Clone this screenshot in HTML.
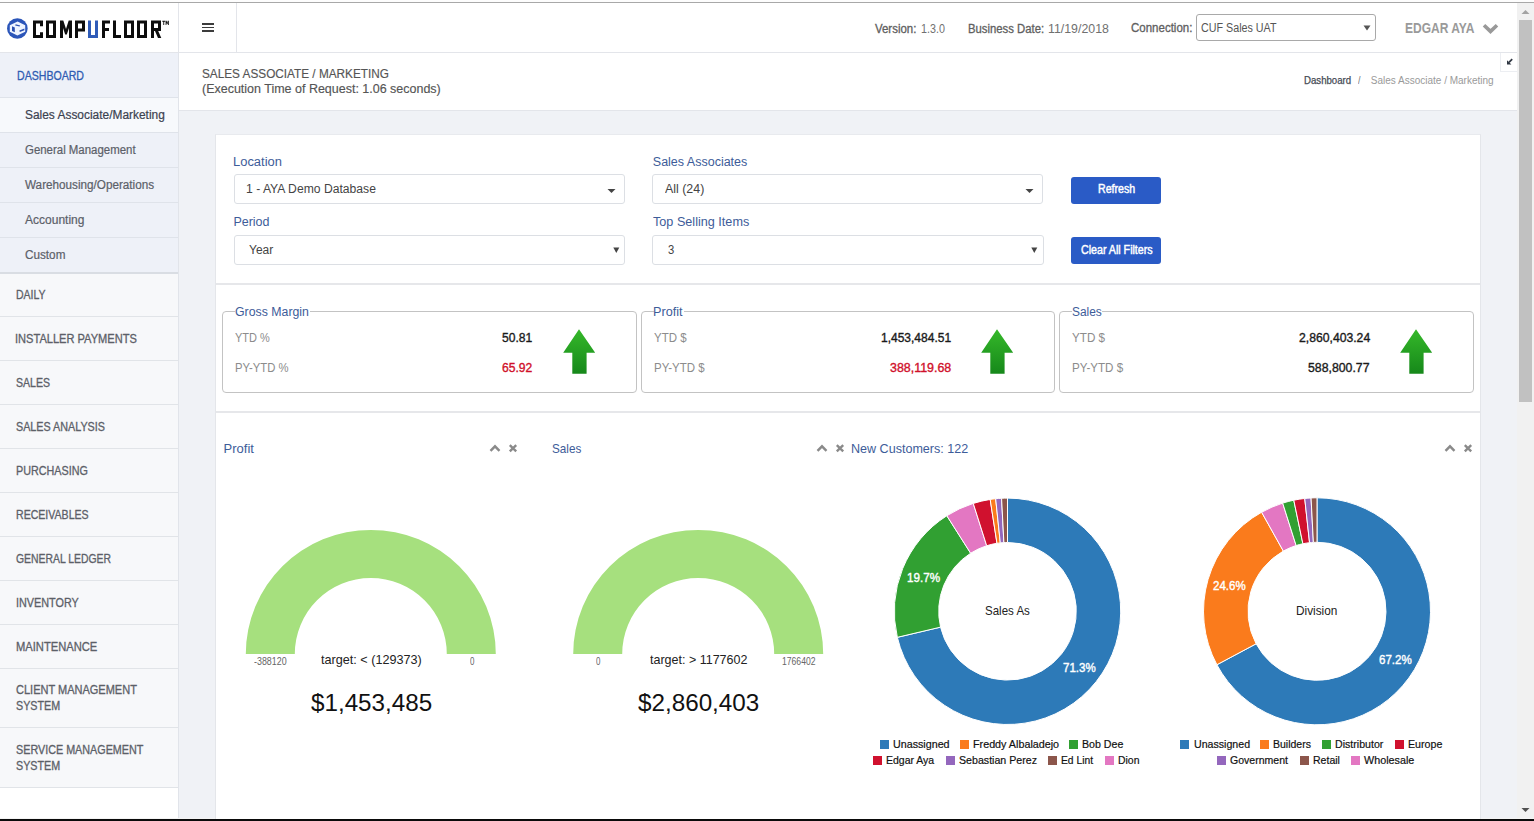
<!DOCTYPE html>
<html><head><meta charset="utf-8"><style>
html,body{margin:0;padding:0;}
body{width:1534px;height:821px;position:relative;overflow:hidden;background:#fff;font-family:"Liberation Sans",sans-serif;}
.t{position:absolute;white-space:nowrap;transform-origin:0 0;}
svg{position:absolute}
</style></head><body>
<div style="position:absolute;left:0px;top:0px;width:1534px;height:2px;background:#fdfdfd"></div>
<div style="position:absolute;left:0px;top:2px;width:1534px;height:1px;background:#a8a8a8"></div>
<div style="position:absolute;left:0px;top:818px;width:1534px;height:1px;background:#f4f4f4"></div>
<div style="position:absolute;left:0px;top:819px;width:1534px;height:2px;background:#0a0a0a"></div>
<div style="position:absolute;left:179px;top:111px;width:1338px;height:707px;background:#f0f2f6"></div>
<div style="position:absolute;left:0px;top:3px;width:1517px;height:49px;background:#fff"></div>
<div style="position:absolute;left:0px;top:52px;width:1517px;height:1px;background:#e3e5ea"></div>
<div style="position:absolute;left:178px;top:3px;width:1px;height:49px;background:#e3e5ea"></div>
<div style="position:absolute;left:236px;top:3px;width:1px;height:49px;background:#e3e5ea"></div>
<div style="position:absolute;left:202px;top:23.2px;width:12px;height:1.7px;background:#3c3c3c"></div>
<div style="position:absolute;left:202px;top:26.7px;width:12px;height:1.7px;background:#3c3c3c"></div>
<div style="position:absolute;left:202px;top:30.2px;width:12px;height:1.7px;background:#3c3c3c"></div>
<div style="position:absolute;left:0px;top:53px;width:178px;height:765px;background:#fff"></div>
<div style="position:absolute;left:178px;top:53px;width:1px;height:765px;background:#e1e4ea"></div>
<div style="position:absolute;left:0px;top:53px;width:178px;height:44px;background:#eef1f8"></div>
<div style="position:absolute;left:0px;top:97px;width:178px;height:1px;background:#dfe3ea"></div>
<div class="t" style="left:16.60px;top:70.34px;font-size:12px;line-height:12px;color:#2f5cb3;-webkit-text-stroke:0.3px #2f5cb3;transform:scaleX(0.8815);">DASHBOARD</div>
<div style="position:absolute;left:0px;top:98px;width:178px;height:34px;background:#f7f9fc"></div>
<div style="position:absolute;left:0px;top:132px;width:178px;height:1px;background:#dfe3ea"></div>
<div class="t" style="left:25.10px;top:109.14px;font-size:12px;line-height:12px;color:#3b4250;-webkit-text-stroke:0.2px #3b4250;transform:scaleX(0.9934);">Sales Associate/Marketing</div>
<div style="position:absolute;left:0px;top:133px;width:178px;height:34px;background:#eef1f8"></div>
<div style="position:absolute;left:0px;top:167px;width:178px;height:1px;background:#dfe3ea"></div>
<div class="t" style="left:25.10px;top:144.14px;font-size:12px;line-height:12px;color:#5b6068;-webkit-text-stroke:0.2px #5b6068;transform:scaleX(0.9526);">General Management</div>
<div style="position:absolute;left:0px;top:168px;width:178px;height:34px;background:#eef1f8"></div>
<div style="position:absolute;left:0px;top:202px;width:178px;height:1px;background:#dfe3ea"></div>
<div class="t" style="left:25.10px;top:179.14px;font-size:12px;line-height:12px;color:#5b6068;-webkit-text-stroke:0.2px #5b6068;transform:scaleX(0.9759);">Warehousing/Operations</div>
<div style="position:absolute;left:0px;top:203px;width:178px;height:34px;background:#eef1f8"></div>
<div style="position:absolute;left:0px;top:237px;width:178px;height:1px;background:#dfe3ea"></div>
<div class="t" style="left:25.10px;top:214.14px;font-size:12px;line-height:12px;color:#5b6068;-webkit-text-stroke:0.2px #5b6068;">Accounting</div>
<div style="position:absolute;left:0px;top:238px;width:178px;height:34px;background:#eef1f8"></div>
<div style="position:absolute;left:0px;top:272px;width:178px;height:1px;background:#dfe3ea"></div>
<div class="t" style="left:25.10px;top:249.14px;font-size:12px;line-height:12px;color:#5b6068;-webkit-text-stroke:0.2px #5b6068;transform:scaleX(0.9771);">Custom</div>
<div style="position:absolute;left:0px;top:273px;width:178px;height:43px;background:#f7f8fa"></div>
<div style="position:absolute;left:0px;top:316px;width:178px;height:1px;background:#e1e4e8"></div>
<div class="t" style="left:16.40px;top:289.14px;font-size:12px;line-height:12px;color:#5c6068;-webkit-text-stroke:0.3px #5c6068;transform:scaleX(0.8761);">DAILY</div>
<div style="position:absolute;left:0px;top:317px;width:178px;height:43px;background:#f7f8fa"></div>
<div style="position:absolute;left:0px;top:360px;width:178px;height:1px;background:#e1e4e8"></div>
<div class="t" style="left:15.48px;top:333.14px;font-size:12px;line-height:12px;color:#5c6068;-webkit-text-stroke:0.3px #5c6068;transform:scaleX(0.9227);">INSTALLER PAYMENTS</div>
<div style="position:absolute;left:0px;top:361px;width:178px;height:43px;background:#f7f8fa"></div>
<div style="position:absolute;left:0px;top:404px;width:178px;height:1px;background:#e1e4e8"></div>
<div class="t" style="left:16.40px;top:377.14px;font-size:12px;line-height:12px;color:#5c6068;-webkit-text-stroke:0.3px #5c6068;transform:scaleX(0.8789);">SALES</div>
<div style="position:absolute;left:0px;top:405px;width:178px;height:43px;background:#f7f8fa"></div>
<div style="position:absolute;left:0px;top:448px;width:178px;height:1px;background:#e1e4e8"></div>
<div class="t" style="left:16.40px;top:421.14px;font-size:12px;line-height:12px;color:#5c6068;-webkit-text-stroke:0.3px #5c6068;transform:scaleX(0.8966);">SALES ANALYSIS</div>
<div style="position:absolute;left:0px;top:449px;width:178px;height:43px;background:#f7f8fa"></div>
<div style="position:absolute;left:0px;top:492px;width:178px;height:1px;background:#e1e4e8"></div>
<div class="t" style="left:16.40px;top:465.14px;font-size:12px;line-height:12px;color:#5c6068;-webkit-text-stroke:0.3px #5c6068;transform:scaleX(0.8986);">PURCHASING</div>
<div style="position:absolute;left:0px;top:493px;width:178px;height:43px;background:#f7f8fa"></div>
<div style="position:absolute;left:0px;top:536px;width:178px;height:1px;background:#e1e4e8"></div>
<div class="t" style="left:16.40px;top:509.14px;font-size:12px;line-height:12px;color:#5c6068;-webkit-text-stroke:0.3px #5c6068;transform:scaleX(0.8803);">RECEIVABLES</div>
<div style="position:absolute;left:0px;top:537px;width:178px;height:43px;background:#f7f8fa"></div>
<div style="position:absolute;left:0px;top:580px;width:178px;height:1px;background:#e1e4e8"></div>
<div class="t" style="left:16.40px;top:553.14px;font-size:12px;line-height:12px;color:#5c6068;-webkit-text-stroke:0.3px #5c6068;transform:scaleX(0.8662);">GENERAL LEDGER</div>
<div style="position:absolute;left:0px;top:581px;width:178px;height:43px;background:#f7f8fa"></div>
<div style="position:absolute;left:0px;top:624px;width:178px;height:1px;background:#e1e4e8"></div>
<div class="t" style="left:15.50px;top:597.14px;font-size:12px;line-height:12px;color:#5c6068;-webkit-text-stroke:0.3px #5c6068;transform:scaleX(0.9013);">INVENTORY</div>
<div style="position:absolute;left:0px;top:625px;width:178px;height:43px;background:#f7f8fa"></div>
<div style="position:absolute;left:0px;top:668px;width:178px;height:1px;background:#e1e4e8"></div>
<div class="t" style="left:16.40px;top:641.14px;font-size:12px;line-height:12px;color:#5c6068;-webkit-text-stroke:0.3px #5c6068;transform:scaleX(0.9309);">MAINTENANCE</div>
<div style="position:absolute;left:0px;top:669px;width:178px;height:58px;background:#f7f8fa"></div>
<div style="position:absolute;left:0px;top:727px;width:178px;height:1px;background:#e1e4e8"></div>
<div class="t" style="left:16.40px;top:683.84px;font-size:12px;line-height:12px;color:#5c6068;-webkit-text-stroke:0.3px #5c6068;transform:scaleX(0.9172);">CLIENT MANAGEMENT</div>
<div class="t" style="left:16.40px;top:699.84px;font-size:12px;line-height:12px;color:#5c6068;-webkit-text-stroke:0.3px #5c6068;transform:scaleX(0.8937);">SYSTEM</div>
<div style="position:absolute;left:0px;top:728px;width:178px;height:59px;background:#f7f8fa"></div>
<div style="position:absolute;left:0px;top:787px;width:178px;height:1px;background:#e1e4e8"></div>
<div class="t" style="left:16.40px;top:743.94px;font-size:12px;line-height:12px;color:#5c6068;-webkit-text-stroke:0.3px #5c6068;transform:scaleX(0.8984);">SERVICE MANAGEMENT</div>
<div class="t" style="left:16.40px;top:759.84px;font-size:12px;line-height:12px;color:#5c6068;-webkit-text-stroke:0.3px #5c6068;transform:scaleX(0.8937);">SYSTEM</div>
<div style="position:absolute;left:0px;top:272px;width:178px;height:2px;background:#d9dde3"></div>
<div class="t" style="left:874.90px;top:22.74px;font-size:12px;line-height:12px;color:#606060;-webkit-text-stroke:0.3px #606060;transform:scaleX(0.9529);">Version:</div>
<div class="t" style="left:920.50px;top:22.74px;font-size:12px;line-height:12px;color:#707070;transform:scaleX(0.8958);">1.3.0</div>
<div class="t" style="left:967.60px;top:22.74px;font-size:12px;line-height:12px;color:#606060;-webkit-text-stroke:0.3px #606060;transform:scaleX(0.9431);">Business Date:</div>
<div class="t" style="left:1047.60px;top:22.74px;font-size:12px;line-height:12px;color:#707070;transform:scaleX(1.0287);">11/19/2018</div>
<div class="t" style="left:1131.40px;top:22.24px;font-size:12px;line-height:12px;color:#606060;-webkit-text-stroke:0.3px #606060;transform:scaleX(0.9590);">Connection:</div>
<div style="position:absolute;left:1196px;top:14px;width:178px;height:25px;background:#fff;border:1px solid #a9a9a9;border-radius:3px"></div>
<div class="t" style="left:1200.50px;top:21.82px;font-size:12.5px;line-height:12.5px;color:#555;transform:scaleX(0.8580);">CUF Sales UAT</div>
<svg style="position:absolute;left:1363px;top:25px" width="8" height="6"><path d="M0.5 0.5H7.5L4 5.5Z" fill="#555"/></svg>
<div class="t" style="left:1405.00px;top:21.01px;font-size:14.4px;line-height:14.4px;color:#9a9a9a;font-weight:700;transform:scaleX(0.8350);">EDGAR AYA</div>
<svg style="position:absolute;left:1481px;top:20.5px" width="19" height="14"><path d="M3 4.2L9.5 10.4L16 4.2" fill="none" stroke="#999" stroke-width="3.6"/></svg>
<div style="position:absolute;left:179px;top:53px;width:1338px;height:57px;background:#fff"></div>
<div style="position:absolute;left:179px;top:110px;width:1338px;height:1px;background:#e3e5ea"></div>
<div class="t" style="left:201.80px;top:67.64px;font-size:12px;line-height:12px;color:#555;-webkit-text-stroke:0.15px #555;transform:scaleX(0.9810);">SALES ASSOCIATE / MARKETING</div>
<div class="t" style="left:201.80px;top:82.54px;font-size:12px;line-height:12px;color:#555;-webkit-text-stroke:0.15px #555;transform:scaleX(1.0406);">(Execution Time of Request: 1.06 seconds)</div>
<div class="t" style="left:1303.70px;top:76.13px;font-size:10px;line-height:10px;color:#454b55;-webkit-text-stroke:0.25px #454b55;transform:scaleX(0.9636);">Dashboard</div>
<div class="t" style="left:1357.80px;top:76.13px;font-size:10px;line-height:10px;color:#777;transform:scaleX(0.9000);">/</div>
<div class="t" style="left:1370.80px;top:76.13px;font-size:10px;line-height:10px;color:#9a9a9a;">Sales Associate / Marketing</div>
<div style="position:absolute;left:1500px;top:53px;width:17px;height:18px;background:#fff;border-left:1px solid #eceef2;border-bottom:1px solid #eceef2"></div>
<svg style="position:absolute;left:1506px;top:58px" width="8" height="8"><path d="M6.2 1.2L3 4.4" stroke="#2f3642" stroke-width="1.7"/><path d="M1 2.2V6.6H5.4Z" fill="#2f3642"/></svg>
<div style="position:absolute;left:1517px;top:3px;width:17px;height:815px;background:#f1f1f1"></div>
<div style="position:absolute;left:1519px;top:20px;width:13px;height:382px;background:#c1c1c1"></div>
<svg style="position:absolute;left:1521px;top:9px" width="9" height="6"><path d="M0.5 5L4.5 1L8.5 5Z" fill="#a3a3a3"/></svg>
<svg style="position:absolute;left:1521px;top:807px" width="9" height="6"><path d="M0.5 1L8.5 1L4.5 5Z" fill="#505050"/></svg>
<div style="position:absolute;left:215px;top:134px;width:1264px;height:684px;background:#fff;border-left:1px solid #e4e6ea;border-top:1px solid #e8eaee;border-right:1px solid #e4e6ea"></div>
<div style="position:absolute;left:216px;top:283px;width:1264px;height:2px;background:#e6e7ea"></div>
<div style="position:absolute;left:216px;top:411px;width:1264px;height:2px;background:#e6e7ea"></div>
<div class="t" style="left:233.37px;top:155.52px;font-size:12.5px;line-height:12.5px;color:#3d5c99;transform:scaleX(1.0344);">Location</div>
<div class="t" style="left:652.80px;top:155.52px;font-size:12.5px;line-height:12.5px;color:#3d5c99;">Sales Associates</div>
<div class="t" style="left:233.40px;top:216.02px;font-size:12.5px;line-height:12.5px;color:#3d5c99;">Period</div>
<div class="t" style="left:652.80px;top:216.02px;font-size:12.5px;line-height:12.5px;color:#3d5c99;transform:scaleX(1.0112);">Top Selling Items</div>
<div style="position:absolute;left:234px;top:174px;width:389px;height:28px;background:#fff;border:1px solid #dcdfe4;border-radius:3px"></div>
<div style="position:absolute;left:652px;top:174px;width:389px;height:28px;background:#fff;border:1px solid #dcdfe4;border-radius:3px"></div>
<div style="position:absolute;left:234px;top:235px;width:389px;height:28px;background:#fff;border:1px solid #dcdfe4;border-radius:3px"></div>
<div style="position:absolute;left:652px;top:235px;width:390px;height:28px;background:#fff;border:1px solid #dcdfe4;border-radius:3px"></div>
<div class="t" style="left:246.40px;top:183.12px;font-size:12.5px;line-height:12.5px;color:#444;transform:scaleX(0.9721);">1 - AYA Demo Database</div>
<div class="t" style="left:664.80px;top:182.92px;font-size:12.5px;line-height:12.5px;color:#444;transform:scaleX(0.9916);">All (24)</div>
<div class="t" style="left:249.10px;top:243.92px;font-size:12.5px;line-height:12.5px;color:#444;transform:scaleX(0.9604);">Year</div>
<div class="t" style="left:667.50px;top:243.82px;font-size:12.5px;line-height:12.5px;color:#444;transform:scaleX(0.9000);">3</div>
<svg style="position:absolute;left:607px;top:188px" width="10" height="6"><path d="M0.5 1L8.5 1L4.5 5Z" fill="#444"/></svg>
<svg style="position:absolute;left:1025px;top:188px" width="10" height="6"><path d="M0.5 1L8.5 1L4.5 5Z" fill="#444"/></svg>
<svg style="position:absolute;left:613px;top:247px" width="7" height="7"><path d="M0.3 0.5L6.3 0.5L3.3 6Z" fill="#444"/></svg>
<svg style="position:absolute;left:1031px;top:247px" width="7" height="7"><path d="M0.3 0.5L6.3 0.5L3.3 6Z" fill="#444"/></svg>
<div style="position:absolute;left:1071px;top:177px;width:90px;height:27px;background:#2a5bc6;border-radius:3px"></div>
<div style="position:absolute;left:1071px;top:237px;width:90px;height:27px;background:#2a5bc6;border-radius:3px"></div>
<div class="t" style="left:1097.70px;top:183.44px;font-size:12px;line-height:12px;color:#fff;-webkit-text-stroke:0.45px #fff;transform:scaleX(0.8828);">Refresh</div>
<div class="t" style="left:1080.80px;top:243.64px;font-size:12px;line-height:12px;color:#fff;-webkit-text-stroke:0.45px #fff;transform:scaleX(0.8876);">Clear All Filters</div>
<div style="position:absolute;left:222px;top:311px;width:413px;height:80px;border:1px solid #c3c3c3;border-radius:4px"></div>
<div style="position:absolute;left:234.5px;top:310px;width:75.19999999999999px;height:4px;background:#fff"></div>
<div class="t" style="left:235.20px;top:306.02px;font-size:12.5px;line-height:12.5px;color:#3d5c99;transform:scaleX(0.9858);">Gross Margin</div>
<div class="t" style="left:235.20px;top:332.04px;font-size:12px;line-height:12px;color:#8c8c8c;transform:scaleX(0.9156);">YTD %</div>
<div class="t" style="left:235.20px;top:362.04px;font-size:12px;line-height:12px;color:#8c8c8c;transform:scaleX(0.9417);">PY-YTD %</div>
<div class="t" style="left:502.40px;top:332.04px;font-size:12px;line-height:12px;color:#1a1a1a;-webkit-text-stroke:0.35px #1a1a1a;transform:scaleX(1.0081);">50.81</div>
<div class="t" style="left:502.40px;top:362.34px;font-size:12px;line-height:12px;color:#d0102a;-webkit-text-stroke:0.35px #d0102a;transform:scaleX(1.0081);">65.92</div>
<svg style="position:absolute;left:562.3px;top:328px" width="34" height="47"><defs><linearGradient id="g222" x1="0" y1="0" x2="0" y2="1"><stop offset="0" stop-color="#35b82a"/><stop offset="1" stop-color="#16881a"/></linearGradient></defs><path d="M17 1.3L33.2 24.8H24.6V45.7H10.3V24.8H1.2Z" fill="url(#g222)"/></svg>
<div style="position:absolute;left:641px;top:311px;width:412px;height:80px;border:1px solid #c3c3c3;border-radius:4px"></div>
<div style="position:absolute;left:653.5px;top:310px;width:30.299999999999955px;height:4px;background:#fff"></div>
<div class="t" style="left:653.19px;top:306.02px;font-size:12.5px;line-height:12.5px;color:#3d5c99;transform:scaleX(1.0139);">Profit</div>
<div class="t" style="left:654.20px;top:332.04px;font-size:12px;line-height:12px;color:#8c8c8c;transform:scaleX(0.9582);">YTD $</div>
<div class="t" style="left:654.20px;top:362.04px;font-size:12px;line-height:12px;color:#8c8c8c;transform:scaleX(0.9580);">PY-YTD $</div>
<div class="t" style="left:881.00px;top:332.04px;font-size:12px;line-height:12px;color:#1a1a1a;-webkit-text-stroke:0.35px #1a1a1a;">1,453,484.51</div>
<div class="t" style="left:889.70px;top:362.34px;font-size:12px;line-height:12px;color:#d0102a;-webkit-text-stroke:0.35px #d0102a;transform:scaleX(1.0354);">388,119.68</div>
<svg style="position:absolute;left:980.3px;top:328px" width="34" height="47"><defs><linearGradient id="g641" x1="0" y1="0" x2="0" y2="1"><stop offset="0" stop-color="#35b82a"/><stop offset="1" stop-color="#16881a"/></linearGradient></defs><path d="M17 1.3L33.2 24.8H24.6V45.7H10.3V24.8H1.2Z" fill="url(#g641)"/></svg>
<div style="position:absolute;left:1059px;top:311px;width:413px;height:80px;border:1px solid #c3c3c3;border-radius:4px"></div>
<div style="position:absolute;left:1071.5px;top:310px;width:30.799999999999955px;height:4px;background:#fff"></div>
<div class="t" style="left:1072.20px;top:306.02px;font-size:12.5px;line-height:12.5px;color:#3d5c99;transform:scaleX(0.9543);">Sales</div>
<div class="t" style="left:1072.20px;top:332.04px;font-size:12px;line-height:12px;color:#8c8c8c;transform:scaleX(0.9728);">YTD $</div>
<div class="t" style="left:1072.20px;top:362.04px;font-size:12px;line-height:12px;color:#8c8c8c;transform:scaleX(0.9674);">PY-YTD $</div>
<div class="t" style="left:1298.60px;top:332.04px;font-size:12px;line-height:12px;color:#1a1a1a;-webkit-text-stroke:0.35px #1a1a1a;transform:scaleX(1.0157);">2,860,403.24</div>
<div class="t" style="left:1308.30px;top:362.34px;font-size:12px;line-height:12px;color:#1a1a1a;-webkit-text-stroke:0.35px #1a1a1a;transform:scaleX(1.0234);">588,800.77</div>
<svg style="position:absolute;left:1399.2px;top:328px" width="34" height="47"><defs><linearGradient id="g1059" x1="0" y1="0" x2="0" y2="1"><stop offset="0" stop-color="#35b82a"/><stop offset="1" stop-color="#16881a"/></linearGradient></defs><path d="M17 1.3L33.2 24.8H24.6V45.7H10.3V24.8H1.2Z" fill="url(#g1059)"/></svg>
<div class="t" style="left:223.60px;top:441.80px;font-size:13px;line-height:13px;color:#3d5c99;">Profit</div>
<div class="t" style="left:551.80px;top:441.80px;font-size:13px;line-height:13px;color:#3d5c99;transform:scaleX(0.8995);">Sales</div>
<div class="t" style="left:851.23px;top:441.90px;font-size:13px;line-height:13px;color:#3d5c99;transform:scaleX(0.9655);">New Customers: 122</div>
<svg style="position:absolute;left:488.5px;top:443px" width="13" height="10"><path d="M1.5 7.8L6 3.3L10.5 7.8" fill="none" stroke="#8a8a8a" stroke-width="2.4"/></svg>
<svg style="position:absolute;left:507.7px;top:443px" width="11" height="10"><path d="M1.8 2.2L8.2 8.4M8.2 2.2L1.8 8.4" fill="none" stroke="#8a8a8a" stroke-width="2.4"/></svg>
<svg style="position:absolute;left:816px;top:443px" width="13" height="10"><path d="M1.5 7.8L6 3.3L10.5 7.8" fill="none" stroke="#8a8a8a" stroke-width="2.4"/></svg>
<svg style="position:absolute;left:835.2px;top:443px" width="11" height="10"><path d="M1.8 2.2L8.2 8.4M8.2 2.2L1.8 8.4" fill="none" stroke="#8a8a8a" stroke-width="2.4"/></svg>
<svg style="position:absolute;left:1443.5px;top:443px" width="13" height="10"><path d="M1.5 7.8L6 3.3L10.5 7.8" fill="none" stroke="#8a8a8a" stroke-width="2.4"/></svg>
<svg style="position:absolute;left:1462.8px;top:443px" width="11" height="10"><path d="M1.8 2.2L8.2 8.4M8.2 2.2L1.8 8.4" fill="none" stroke="#8a8a8a" stroke-width="2.4"/></svg>
<svg style="position:absolute;left:0;top:0" width="1534" height="821"><path d="M245.8 654A125 124.125 0 0 1 495.8 654H446.8A76 76 0 0 0 294.8 654Z" fill="#a6e07e"/></svg>
<div class="t" style="left:254.00px;top:657.30px;font-size:10.4px;line-height:10.4px;color:#666;transform:scaleX(0.8552);">-388120</div>
<div class="t" style="left:470.00px;top:657.30px;font-size:10.4px;line-height:10.4px;color:#666;transform:scaleX(0.7667);">0</div>
<div class="t" style="left:320.90px;top:652.90px;font-size:13px;line-height:13px;color:#222;transform:scaleX(0.9712);">target: &lt; (129373)</div>
<div class="t" style="left:310.60px;top:690.91px;font-size:24.8px;line-height:24.8px;color:#111;transform:scaleX(0.9764);">$1,453,485</div>
<svg style="position:absolute;left:0;top:0" width="1534" height="821"><path d="M573.2 654A125 124.125 0 0 1 823.2 654H774.2A76 76 0 0 0 622.2 654Z" fill="#a6e07e"/></svg>
<div class="t" style="left:596.30px;top:657.30px;font-size:10.4px;line-height:10.4px;color:#666;transform:scaleX(0.7667);">0</div>
<div class="t" style="left:782.00px;top:657.30px;font-size:10.4px;line-height:10.4px;color:#666;transform:scaleX(0.8286);">1766402</div>
<div class="t" style="left:650.00px;top:652.90px;font-size:13px;line-height:13px;color:#222;transform:scaleX(0.9616);">target: &gt; 1177602</div>
<div class="t" style="left:637.70px;top:690.91px;font-size:24.8px;line-height:24.8px;color:#111;transform:scaleX(0.9772);">$2,860,403</div>
<svg style="position:absolute;left:0;top:0" width="1534" height="821"><path d="M1007.50 498.10A113.2 113.2 0 1 1 897.34 637.34L940.55 627.13A68.8 68.8 0 1 0 1007.50 542.50Z" fill="#2d7ab8" stroke="#fff" stroke-width="1"/><path d="M897.34 637.34A113.2 113.2 0 0 1 946.84 515.72L970.64 553.21A68.8 68.8 0 0 0 940.55 627.13Z" fill="#31a032" stroke="#fff" stroke-width="1"/><path d="M946.84 515.72A113.2 113.2 0 0 1 973.27 503.40L986.70 545.72A68.8 68.8 0 0 0 970.64 553.21Z" fill="#e377c2" stroke="#fff" stroke-width="1"/><path d="M973.27 503.40A113.2 113.2 0 0 1 990.18 499.43L996.97 543.31A68.8 68.8 0 0 0 986.70 545.72Z" fill="#d0112e" stroke="#fff" stroke-width="1"/><path d="M990.18 499.43A113.2 113.2 0 0 1 995.67 498.72L1000.31 542.88A68.8 68.8 0 0 0 996.97 543.31Z" fill="#fa7b1c" stroke="#fff" stroke-width="1"/><path d="M995.67 498.72A113.2 113.2 0 0 1 1001.58 498.26L1003.90 542.59A68.8 68.8 0 0 0 1000.31 542.88Z" fill="#9467bd" stroke="#fff" stroke-width="1"/><path d="M1001.58 498.26A113.2 113.2 0 0 1 1007.50 498.10L1007.50 542.50A68.8 68.8 0 0 0 1003.90 542.59Z" fill="#8c564b" stroke="#fff" stroke-width="1"/></svg>
<div class="t" style="left:984.50px;top:604.00px;font-size:13px;line-height:13px;color:#222;transform:scaleX(0.8861);">Sales As</div>
<div class="t" style="left:907.00px;top:572.22px;font-size:12.5px;line-height:12.5px;color:#fff;-webkit-text-stroke:0.4px #fff;transform:scaleX(0.9341);">19.7%</div>
<div class="t" style="left:1062.70px;top:662.22px;font-size:12.5px;line-height:12.5px;color:#fff;-webkit-text-stroke:0.4px #fff;transform:scaleX(0.9228);">71.3%</div>
<svg style="position:absolute;left:0;top:0" width="1534" height="821"><path d="M1317.00 497.80A113.5 113.5 0 1 1 1216.88 664.76L1256.13 643.80A69 69 0 1 0 1317.00 542.30Z" fill="#2d7ab8" stroke="#fff" stroke-width="1"/><path d="M1216.88 664.76A113.5 113.5 0 0 1 1261.63 512.22L1283.34 551.07A69 69 0 0 0 1256.13 643.80Z" fill="#fa7b1c" stroke="#fff" stroke-width="1"/><path d="M1261.63 512.22A113.5 113.5 0 0 1 1282.68 503.11L1296.14 545.53A69 69 0 0 0 1283.34 551.07Z" fill="#e377c2" stroke="#fff" stroke-width="1"/><path d="M1282.68 503.11A113.5 113.5 0 0 1 1293.79 500.20L1302.89 543.76A69 69 0 0 0 1296.14 545.53Z" fill="#31a032" stroke="#fff" stroke-width="1"/><path d="M1293.79 500.20A113.5 113.5 0 0 1 1304.74 498.46L1309.55 542.70A69 69 0 0 0 1302.89 543.76Z" fill="#d0112e" stroke="#fff" stroke-width="1"/><path d="M1304.74 498.46A113.5 113.5 0 0 1 1311.06 497.96L1313.39 542.39A69 69 0 0 0 1309.55 542.70Z" fill="#9467bd" stroke="#fff" stroke-width="1"/><path d="M1311.06 497.96A113.5 113.5 0 0 1 1317.00 497.80L1317.00 542.30A69 69 0 0 0 1313.39 542.39Z" fill="#8c564b" stroke="#fff" stroke-width="1"/></svg>
<div class="t" style="left:1296.09px;top:604.00px;font-size:13px;line-height:13px;color:#222;transform:scaleX(0.9078);">Division</div>
<div class="t" style="left:1212.80px;top:580.12px;font-size:12.5px;line-height:12.5px;color:#fff;-webkit-text-stroke:0.4px #fff;transform:scaleX(0.9228);">24.6%</div>
<div class="t" style="left:1379.00px;top:653.72px;font-size:12.5px;line-height:12.5px;color:#fff;-webkit-text-stroke:0.4px #fff;transform:scaleX(0.9256);">67.2%</div>
<div style="position:absolute;left:880px;top:740px;width:9px;height:9px;background:#2d7ab8"></div>
<div class="t" style="left:893.20px;top:739.07px;font-size:11.5px;line-height:11.5px;color:#111;-webkit-text-stroke:0.2px #111;transform:scaleX(0.9314);">Unassigned</div>
<div style="position:absolute;left:960px;top:740px;width:9px;height:9px;background:#fa7b1c"></div>
<div class="t" style="left:972.80px;top:739.07px;font-size:11.5px;line-height:11.5px;color:#111;-webkit-text-stroke:0.2px #111;transform:scaleX(0.9350);">Freddy Albaladejo</div>
<div style="position:absolute;left:1069px;top:740px;width:9px;height:9px;background:#31a032"></div>
<div class="t" style="left:1082.40px;top:739.07px;font-size:11.5px;line-height:11.5px;color:#111;-webkit-text-stroke:0.2px #111;transform:scaleX(0.9243);">Bob Dee</div>
<div style="position:absolute;left:873px;top:756px;width:9px;height:9px;background:#d0112e"></div>
<div class="t" style="left:886.40px;top:755.07px;font-size:11.5px;line-height:11.5px;color:#111;-webkit-text-stroke:0.2px #111;transform:scaleX(0.9114);">Edgar Aya</div>
<div style="position:absolute;left:946px;top:756px;width:9px;height:9px;background:#9467bd"></div>
<div class="t" style="left:959.20px;top:755.07px;font-size:11.5px;line-height:11.5px;color:#111;-webkit-text-stroke:0.2px #111;transform:scaleX(0.9240);">Sebastian Perez</div>
<div style="position:absolute;left:1048px;top:756px;width:9px;height:9px;background:#8c564b"></div>
<div class="t" style="left:1061.40px;top:755.07px;font-size:11.5px;line-height:11.5px;color:#111;-webkit-text-stroke:0.2px #111;transform:scaleX(0.8933);">Ed Lint</div>
<div style="position:absolute;left:1105px;top:756px;width:9px;height:9px;background:#e377c2"></div>
<div class="t" style="left:1118.20px;top:755.07px;font-size:11.5px;line-height:11.5px;color:#111;-webkit-text-stroke:0.2px #111;transform:scaleX(0.9073);">Dion</div>
<div style="position:absolute;left:1180px;top:740px;width:9px;height:9px;background:#2d7ab8"></div>
<div class="t" style="left:1193.50px;top:739.07px;font-size:11.5px;line-height:11.5px;color:#111;-webkit-text-stroke:0.2px #111;transform:scaleX(0.9231);">Unassigned</div>
<div style="position:absolute;left:1260px;top:740px;width:9px;height:9px;background:#fa7b1c"></div>
<div class="t" style="left:1273.00px;top:739.07px;font-size:11.5px;line-height:11.5px;color:#111;-webkit-text-stroke:0.2px #111;transform:scaleX(0.9139);">Builders</div>
<div style="position:absolute;left:1322px;top:740px;width:9px;height:9px;background:#31a032"></div>
<div class="t" style="left:1335.30px;top:739.07px;font-size:11.5px;line-height:11.5px;color:#111;-webkit-text-stroke:0.2px #111;transform:scaleX(0.9225);">Distributor</div>
<div style="position:absolute;left:1395px;top:740px;width:9px;height:9px;background:#d0112e"></div>
<div class="t" style="left:1408.20px;top:739.07px;font-size:11.5px;line-height:11.5px;color:#111;-webkit-text-stroke:0.2px #111;transform:scaleX(0.9268);">Europe</div>
<div style="position:absolute;left:1217px;top:756px;width:9px;height:9px;background:#9467bd"></div>
<div class="t" style="left:1230.20px;top:755.07px;font-size:11.5px;line-height:11.5px;color:#111;-webkit-text-stroke:0.2px #111;transform:scaleX(0.9160);">Government</div>
<div style="position:absolute;left:1300px;top:756px;width:9px;height:9px;background:#8c564b"></div>
<div class="t" style="left:1313.40px;top:755.07px;font-size:11.5px;line-height:11.5px;color:#111;-webkit-text-stroke:0.2px #111;transform:scaleX(0.9152);">Retail</div>
<div style="position:absolute;left:1351px;top:756px;width:9px;height:9px;background:#e377c2"></div>
<div class="t" style="left:1363.60px;top:755.07px;font-size:11.5px;line-height:11.5px;color:#111;-webkit-text-stroke:0.2px #111;transform:scaleX(0.9363);">Wholesale</div>
<svg style="position:absolute;left:0;top:0" width="180" height="52">
<circle cx="17.35" cy="28.45" r="10.3" fill="#2b55b9"/>
<path d="M17.6 21.6L25.2 25.3V31.7L17.4 35.6L9.8 31.7V25.3Z" fill="#eef4ff"/>
<path d="M12 26.2L14.8 27.5V32.3L12 31Z" fill="#2a4fb0"/>
<path d="M15.6 24.3L20.2 25.4L19.6 26.6L15.2 25.6Z" fill="#2a4fb0"/>
<path d="M19.4 30.4L24.4 28.6V30.2L19.8 31.9Z" fill="#2a4fb0"/>
<g fill="#0d0d0d" fill-rule="evenodd">
<path d="M33 20.5H43V26.2H40V23.5H36V35H40V32.3H43V38H33Z"/>
<path d="M46 20.5H56V38H46Z M49 23.5V35H53V23.5Z"/>
<path d="M60 20.5H63.3L66 29L68.7 20.5H72V38H69V28L66.8 34.5H65.2L63 28V38H60Z"/>
<path d="M75 20.5H85V31.5H78V38H75Z M78 23.5V28.5H82V23.5Z"/>
<path d="M102 20.5H110V23.5H105V28H109V31H105V38H102Z"/>
<path d="M113 20.5H116V35H121V38H113Z"/>
<path d="M124 20.5H134V38H124Z M127 23.5V35H131V23.5Z"/>
<path d="M137 20.5H147V38H137Z M140 23.5V35H144V23.5Z"/>
<path d="M151 20.5H161V31H158.2L161.3 38H158L155 31H154V38H151Z M154 23.5V28H158V23.5Z"/>
<path d="M162.3 20.8H165.2V21.8H164.2V25H163.3V21.8H162.3Z M165.6 20.8H166.6L167.2 23L167.8 20.8H168.8V25H168V22.4L167.5 24.3H166.9L166.4 22.4V25H165.6Z"/>
</g>
<path d="M88 20.5H91V35H95V20.5H98V38H88Z" fill="#2f5bb8"/>
</svg>
</body></html>
